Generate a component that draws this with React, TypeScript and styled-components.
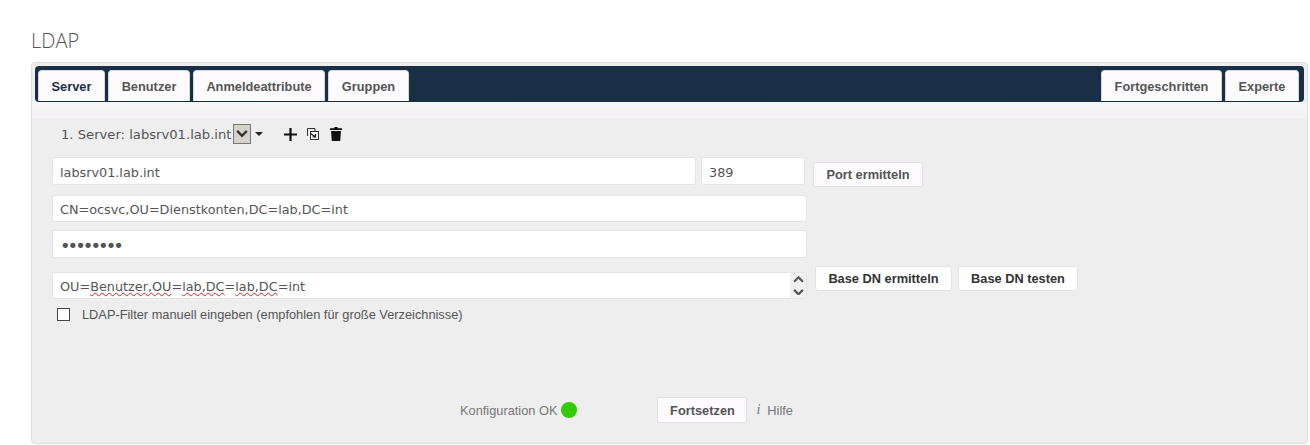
import React from "react";
import styled, { createGlobalStyle } from "styled-components";

const GlobalStyle = createGlobalStyle`
  html, body {
    margin: 0;
    padding: 0;
    background: #fff;
    font-family: "Liberation Sans", Arial, sans-serif;
  }
`;

const Page = styled.div`
  width: 1310px;
  height: 445px;
  padding: 28px 2px 1px 31px;
  box-sizing: border-box;
  display: flex;
  flex-direction: column;
  overflow: hidden;
`;

const Title = styled.h2`
  margin: 0 0 9px;
  height: 25px;
  font-family: "Open Sans", sans-serif;
  font-size: 20px;
  line-height: 25px;
  font-weight: 300;
  color: #555;
`;

const Panel = styled.div`
  flex: 1;
  display: flex;
  flex-direction: column;
  background: #eee;
  border: 1px solid #ddd;
  border-radius: 4px;
  padding: 3px;
  box-sizing: border-box;
`;

const TabBar = styled.div`
  display: flex;
  justify-content: space-between;
  height: 36px;
  background: #182f46;
  border-radius: 4px;
  padding: 4px 5px 0 3px;
  box-sizing: border-box;
`;

const TabGroup = styled.div`
  display: flex;
  gap: 3px;
`;

const Tab = styled.div<{ $active?: boolean; $width: number }>`
  width: ${(p) => p.$width}px;
  height: 31px;
  display: flex;
  align-items: center;
  justify-content: center;
  background: #fdfbfd;
  border: 1px solid #d8d8d8;
  border-bottom: none;
  border-radius: 4px 4px 0 0;
  box-sizing: border-box;
  font-size: 12.8px;
  font-weight: 700;
  color: ${(p) => (p.$active ? "#182f46" : "#555")};
`;

const SubHeader = styled.div`
  height: 16px;
  margin: 0 -3px;
  background: linear-gradient(#f7f6f7, #f4f2f4);
`;

const ServerRow = styled.div`
  display: flex;
  align-items: center;
  height: 32px;
  padding-left: 26px;
  font-family: "DejaVu Sans", Verdana, sans-serif;
  font-size: 13.15px;
  color: #555;
`;

const SelectBox = styled.span`
  width: 18px;
  height: 20px;
  margin-left: 1px;
  display: flex;
  align-items: center;
  justify-content: center;
  background: #d5d2cc;
  border: 1px solid #777;
  box-sizing: border-box;
`;

const IconSlot = styled.span<{ $gap: number }>`
  display: flex;
  margin-left: ${(p) => p.$gap}px;
`;

const Form = styled.div`
  display: flex;
  flex-direction: column;
  padding: 7px 0 0 17px;
`;

const Row = styled.div<{ $mt?: number }>`
  display: flex;
  height: ${(p) => (p.$mt === undefined ? "31px" : "auto")};
  margin-top: ${(p) => p.$mt ?? 0}px;
`;

const Input = styled.input<{ $width: number; $height?: number; $ml?: number }>`
  width: ${(p) => p.$width}px;
  height: ${(p) => p.$height ?? 28}px;
  margin-left: ${(p) => p.$ml ?? 0}px;
  padding: 2px 7px 0;
  box-sizing: border-box;
  background: #fff;
  border: 1px solid #e4e4e4;
  border-radius: 3px;
  outline: none;
  font-family: "DejaVu Sans", Verdana, sans-serif;
  font-size: 12.8px;
  color: #555;
`;

const PasswordInput = styled(Input)`
  font-size: 18px;
  letter-spacing: -3px;
`;

const Button = styled.button<{ $width: number; $height?: number; $dark?: boolean; $ml?: number; $mt?: number }>`
  width: ${(p) => p.$width}px;
  height: ${(p) => p.$height ?? 25}px;
  margin: ${(p) => p.$mt ?? 0}px 0 0 ${(p) => p.$ml ?? 0}px;
  padding: 0;
  background: ${(p) => (p.$dark ? "#fff" : "#fdfbfd")};
  border: 1px solid #e2e2e2;
  border-radius: 3px;
  font-family: "Liberation Sans", Arial, sans-serif;
  font-size: 12.8px;
  font-weight: 700;
  color: ${(p) => (p.$dark ? "#333" : "#555")};
`;

const DnField = styled.div`
  width: 755px;
  height: 27px;
  display: flex;
  align-items: center;
  justify-content: space-between;
  padding: 2px 0 0 7px;
  box-sizing: border-box;
  background: #fff;
  border: 1px solid #e4e4e4;
  border-radius: 3px;
  font-family: "DejaVu Sans", Verdana, sans-serif;
  font-size: 12.8px;
  color: #555;
`;

const Misspelled = styled.span`
  text-decoration: underline wavy #e02020 1px;
  text-underline-offset: 1px;
`;

const Spinner = styled.span`
  width: 16px;
  height: 25px;
  margin-top: -2px;
  display: flex;
  flex-direction: column;
  justify-content: center;
  gap: 6px;
  align-items: center;
  background: #f1f1f1;
`;

const CheckRow = styled.label`
  display: flex;
  align-items: center;
  height: 14px;
  margin: 8px 0 0 5px;
  font-size: 12.8px;
  color: #555;
`;

const CheckBox = styled.span`
  width: 13px;
  height: 13px;
  margin-right: 12px;
  box-sizing: border-box;
  background: #fff;
  border: 1px solid #444;
`;

const Footer = styled.div`
  display: flex;
  align-items: center;
  margin-top: 76px;
  padding-left: 425px;
  font-size: 12.8px;
  color: #777;
`;

const StatusDot = styled.span`
  width: 16px;
  height: 16px;
  margin-left: 4px;
  border-radius: 50%;
  background: #3c0;
`;

const HelpMark = styled.span`
  margin-left: 9px;
  font-family: "Liberation Serif", serif;
  font-style: italic;
  font-size: 14px;
`;

const HelpText = styled.span`
  margin-left: 7px;
`;

function Chevron({ up, size = 12, color = "#333" }: { up?: boolean; size?: number; color?: string }) {
  return (
    <svg width={size} height={size * 0.6} viewBox="0 0 10 6" fill="none" stroke={color} strokeWidth={2}>
      <path d={up ? "M1 5.2 5 1.2 9 5.2" : "M1 .8 5 4.8 9 .8"} />
    </svg>
  );
}

function Caret() {
  return (
    <svg width="8" height="4" viewBox="0 0 8 4">
      <path d="M0 0h8L4 4z" fill="#222" />
    </svg>
  );
}

function PlusIcon() {
  return (
    <svg width="13" height="13" viewBox="0 0 13 13" fill="#111">
      <path d="M5.4 0h2.2v5.4H13v2.2H7.6V13H5.4V7.6H0V5.4h5.4z" />
    </svg>
  );
}

function CloneIcon() {
  return (
    <svg width="12" height="12" viewBox="0 0 12 12" fill="none" stroke="#333">
      <path d="M.5 8V.5H8V3" />
      <rect x="3.5" y="3.5" width="8" height="8" fill="#fff" />
      <path d="M3.5 5.5 8 8.5M8.5 6v3h-3" stroke="#111" strokeWidth="1.2" />
    </svg>
  );
}

function TrashIcon() {
  return (
    <svg width="12" height="14" viewBox="0 0 12 14" fill="#111">
      <path d="M4.5 0h3l.5 1.2h4V3H0V1.2h4zM1 4h10l-.8 10H1.8z" />
    </svg>
  );
}

export default function App() {
  return (
    <Page>
      <GlobalStyle />
      <Title>LDAP</Title>
      <Panel>
        <TabBar>
          <TabGroup>
            <Tab $active $width={67}>Server</Tab>
            <Tab $width={82}>Benutzer</Tab>
            <Tab $width={132}>Anmeldeattribute</Tab>
            <Tab $width={81}>Gruppen</Tab>
          </TabGroup>
          <TabGroup>
            <Tab $width={121}>Fortgeschritten</Tab>
            <Tab $width={74}>Experte</Tab>
          </TabGroup>
        </TabBar>
        <SubHeader />
        <ServerRow>
          1. Server: labsrv01.lab.int
          <SelectBox>
            <Chevron />
          </SelectBox>
          <IconSlot $gap={4}>
            <Caret />
          </IconSlot>
          <IconSlot $gap={21}>
            <PlusIcon />
          </IconSlot>
          <IconSlot $gap={10}>
            <CloneIcon />
          </IconSlot>
          <IconSlot $gap={11}>
            <TrashIcon />
          </IconSlot>
        </ServerRow>
        <Form>
          <Row>
            <Input $width={644} defaultValue="labsrv01.lab.int" readOnly />
            <Input $width={104} $ml={5} defaultValue="389" readOnly />
            <Button $width={110} $ml={8} $mt={5}>Port ermitteln</Button>
          </Row>
          <Row $mt={7}>
            <Input $width={755} $height={27} defaultValue="CN=ocsvc,OU=Dienstkonten,DC=lab,DC=int" readOnly />
          </Row>
          <Row $mt={8}>
            <PasswordInput $width={755} type="password" defaultValue="12345678" readOnly />
          </Row>
          <Row $mt={14}>
            <DnField>
              <span>
                OU=<Misspelled>Benutzer,OU</Misspelled>=<Misspelled>lab,DC</Misspelled>=<Misspelled>lab,DC</Misspelled>=int
              </span>
              <Spinner>
                <Chevron up size={11} color="#555" />
                <Chevron size={11} color="#555" />
              </Spinner>
            </DnField>
            <Button $dark $width={137} $ml={8} $mt={-6}>Base DN ermitteln</Button>
            <Button $dark $width={120} $ml={6} $mt={-6}>Base DN testen</Button>
          </Row>
          <CheckRow>
            <CheckBox />
            LDAP-Filter manuell eingeben (empfohlen für große Verzeichnisse)
          </CheckRow>
        </Form>
        <Footer>
          Konfiguration OK
          <StatusDot />
          <Button $width={90} $height={26} $ml={80}>Fortsetzen</Button>
          <HelpMark>i</HelpMark>
          <HelpText>Hilfe</HelpText>
        </Footer>
      </Panel>
    </Page>
  );
}
